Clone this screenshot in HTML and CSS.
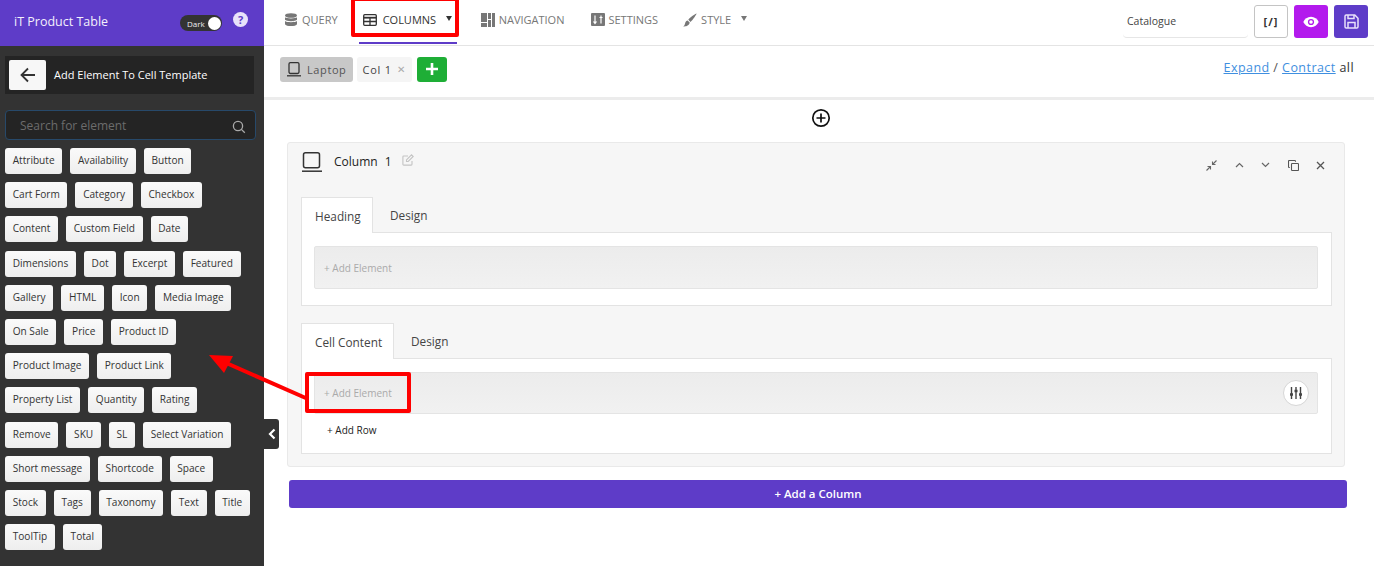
FILE: index.html
```html
<!DOCTYPE html>
<html lang="en">
<head>
<meta charset="utf-8">
<title>iT Product Table</title>
<link rel="stylesheet" href="styles.css">
</head>
<body>
<div class="app">
  <aside class="side">
    <div class="brand">
      <span class="brand-name">iT Product Table</span>
      <span class="toggle"><span class="toggle-label">Dark</span><span class="knob"></span></span>
      <span class="help">?</span>
    </div>
    <div class="back-bar">
      <span class="back"><svg width="18" height="18" viewBox="0 0 18 18" fill="none" stroke="#333" stroke-width="1.8"><path d="M16 9H2.500M9 2.500 2.500 9 9 15.500"/></svg></span>
      <span class="back-title">Add Element To Cell Template</span>
    </div>
    <div class="search">
      <span>Search for element</span>
      <svg width="14" height="14" viewBox="0 0 14 14" fill="none" stroke="#aaa" stroke-width="1.3"><circle cx="6" cy="6" r="4.600"/><path d="m9.400 9.400 3.400 3.400"/></svg>
    </div>
    <div class="chips">
      <div class="chip-row"><span class="chip">Attribute</span><span class="chip">Availability</span><span class="chip">Button</span></div>
      <div class="chip-row"><span class="chip">Cart Form</span><span class="chip">Category</span><span class="chip">Checkbox</span></div>
      <div class="chip-row"><span class="chip">Content</span><span class="chip">Custom Field</span><span class="chip">Date</span></div>
      <div class="chip-row"><span class="chip">Dimensions</span><span class="chip">Dot</span><span class="chip">Excerpt</span><span class="chip">Featured</span></div>
      <div class="chip-row"><span class="chip">Gallery</span><span class="chip">HTML</span><span class="chip">Icon</span><span class="chip">Media Image</span></div>
      <div class="chip-row"><span class="chip">On Sale</span><span class="chip">Price</span><span class="chip">Product ID</span></div>
      <div class="chip-row"><span class="chip">Product Image</span><span class="chip">Product Link</span></div>
      <div class="chip-row"><span class="chip">Property List</span><span class="chip">Quantity</span><span class="chip">Rating</span></div>
      <div class="chip-row"><span class="chip">Remove</span><span class="chip">SKU</span><span class="chip">SL</span><span class="chip">Select Variation</span></div>
      <div class="chip-row"><span class="chip">Short message</span><span class="chip">Shortcode</span><span class="chip">Space</span></div>
      <div class="chip-row"><span class="chip">Stock</span><span class="chip">Tags</span><span class="chip">Taxonomy</span><span class="chip">Text</span><span class="chip">Title</span></div>
      <div class="chip-row"><span class="chip">ToolTip</span><span class="chip">Total</span></div>
    </div>
    <span class="collapse"><svg width="8" height="12" viewBox="0 0 8 12" fill="none" stroke="#fff" stroke-width="2.2"><path d="M6.500 1.500 2 6l4.500 4.500"/></svg></span>
  </aside>

  <main class="main">
    <nav class="topnav">
      <a class="nav-item nav-query"><svg class="nav-icon" width="14" height="14" viewBox="0 0 14 14" fill="#777"><ellipse cx="7" cy="2.500" rx="6" ry="2.300"/><path d="M1 4.300c1 1.500 11 1.500 12 0v2.400c-1 1.900-11 1.900-12 0zM1 8c1 1.600 11 1.600 12 0v3.200c-1 2.500-11 2.500-12 0z"/></svg>QUERY</a>
      <a class="nav-item nav-columns"><svg class="nav-icon" width="14" height="12" viewBox="0 0 14 12" fill="none" stroke="#333" stroke-width="1.300"><rect x=".7" y=".7" width="12.600" height="10.600" rx="1"/><path d="M.7 3.700h12.600" stroke-width="1.800"/><path d="M.7 7.500h12.600M7 3.700v7.600"/></svg>COLUMNS<span class="caret caret-dark"></span></a>
      <a class="nav-item nav-navigation"><svg class="nav-icon" width="14" height="14" viewBox="0 0 14 14" fill="#777"><path d="M0 0h6v9H0zM0 10h6v4H0zM7 0h3v6H7zM11 0h3v14h-3zM7 7h3v7H7z"/></svg>NAVIGATION</a>
      <a class="nav-item nav-settings"><svg class="nav-icon" width="14" height="13" viewBox="0 0 14 13"><rect width="14" height="13" rx="1" fill="#777"/><path d="M4 2.500v8M2.500 8.500 4 10.500l1.500-2M10 2.500v8M8.500 4.500h3" stroke="#fff" stroke-width="1.200" fill="none"/></svg>SETTINGS</a>
      <a class="nav-item nav-style"><svg class="nav-icon" width="14" height="14" viewBox="0 0 14 14" fill="#777"><path d="M13.500.5c.4.400-3.700 6.600-6 8.400L5.300 6.700C7 4.400 13.100.1 13.500.5zM4.600 7.500 6.700 9.600c-.2 2.400-3 4.300-6.500 3.900 1.500-.9 1.500-2 2-3.500.4-1.300 1.300-2.200 2.400-2.500z"/></svg>STYLE<span class="caret"></span></a>
      <span class="nav-spacer"></span>
      <span class="catalogue">Catalogue</span>
      <span class="tool tool-code">[/]</span>
      <span class="tool tool-eye"><svg width="16" height="12" viewBox="0 0 16 12"><path d="M8 .8C4.500.8 1.700 3 .3 6c1.400 3 4.200 5.200 7.700 5.200S14.300 9 15.700 6C14.300 3 11.500.8 8 .8z" fill="#fff"/><circle cx="8" cy="6" r="3.100" fill="#b31aed"/><circle cx="8" cy="6" r="1.800" fill="#fff"/></svg></span>
      <span class="tool tool-save"><svg width="15" height="15" viewBox="0 0 15 15" fill="none" stroke="#e8e0fa" stroke-width="1.500"><path d="M1 2.200C1 1.500 1.500 1 2.200 1h8.600L14 4.200v8.600c0 .7-.5 1.200-1.200 1.200H2.200C1.500 14 1 13.500 1 12.800z"/><path d="M4 1v3.500h6V1M4 14V8.500h7V14"/></svg></span>
    </nav>

    <div class="subbar">
      <span class="device"><svg width="14" height="15" viewBox="0 0 14 15" fill="none" stroke="#333" stroke-width="1.300"><rect x="2" y=".7" width="10" height="10.800" rx="1.400"/><path d="M0 13.800h14"/></svg>Laptop</span>
      <span class="col-tab">Col 1<span class="col-x">✕</span></span>
      <span class="add-col"><svg width="14" height="14" viewBox="0 0 14 14" stroke="#fff" stroke-width="2.600"><path d="M7 1v12M1 7h12"/></svg></span>
      <span class="expand"><a>Expand</a> / <a>Contract</a> <span class="all">all</span></span>
    </div>

    <div class="content">
      <div class="plus-row"><svg width="20" height="20" viewBox="0 0 20 20" fill="none" stroke="#111" stroke-width="1.700"><circle cx="10" cy="10" r="8.200"/><path d="M10 5.500v9M5.500 10h9"/></svg></div>

      <section class="card">
        <header class="card-head">
          <svg class="card-laptop" width="20" height="20" viewBox="0 0 20 20" fill="none" stroke="#333" stroke-width="1.500"><rect x="1.500" y=".8" width="16" height="15" rx="2"/><path d="M0 19.200h20"/></svg>
          <span class="card-title">Column</span><span class="card-num">1</span>
          <svg class="card-edit" width="12" height="12" viewBox="0 0 12 12" fill="none" stroke="#c4c4c4" stroke-width="1.100"><path d="M10 7v3.300c0 .5-.3.800-.8.800H1.700c-.5 0-.8-.3-.8-.8V2.800c0-.5.300-.8.800-.8H6"/><path d="m4.500 5.800 5-5 1.700 1.700-5 5H4.500z"/></svg>
          <span class="card-tools">
            <svg width="11" height="11" viewBox="0 0 11 11" fill="none" stroke="#666" stroke-width="1.100"><path d="M10.500.5 7 4M6.500 1.500v3h3M.5 10.500 4 7M1.500 6.500h3v3"/></svg>
            <svg width="9" height="6" viewBox="0 0 9 6" fill="none" stroke="#666" stroke-width="1.200"><path d="m1 5 3.500-3.500L8 5"/></svg>
            <svg width="9" height="6" viewBox="0 0 9 6" fill="none" stroke="#666" stroke-width="1.200"><path d="m1 1 3.500 3.500L8 1"/></svg>
            <svg width="11" height="11" viewBox="0 0 11 11" fill="none" stroke="#555" stroke-width="1.100"><rect x="3.500" y="3.500" width="7" height="7" rx=".8"/><path d="M1.800 7.500H1.300c-.5 0-.8-.3-.8-.8V1.300c0-.5.300-.8.800-.8h5.400c.5 0 .8.300.8.800v.5"/></svg>
            <svg width="9" height="9" viewBox="0 0 9 9" fill="none" stroke="#555" stroke-width="1.300"><path d="m1 1 7 7M8 1 1 8"/></svg>
          </span>
        </header>

        <div class="tabs">
          <span class="tab tab-active tab-heading">Heading</span><span class="tab">Design</span>
        </div>
        <div class="panel panel-heading">
          <div class="drop"><span class="drop-text">+ Add Element</span></div>
        </div>

        <div class="tabs tabs-second">
          <span class="tab tab-active tab-cell">Cell Content</span><span class="tab">Design</span>
        </div>
        <div class="panel panel-cell">
          <div class="drop drop-cell">
            <span class="drop-text">+ Add Element</span>
            <span class="tune"><svg width="14" height="14" viewBox="0 0 14 14" stroke="#444" stroke-width="1.400" fill="#444"><path d="M2.500 1v12M7 1v12M11.500 1v12" fill="none"/><path d="M1 8.500h3M5.500 5h3M10 8.500h3" stroke-width="2.400"/></svg></span>
          </div>
          <span class="add-row">+ Add Row</span>
        </div>
      </section>

      <div class="add-column">+ Add a Column</div>
    </div>
  </main>

  <span class="mark mark-columns"></span>
  <span class="mark mark-add"></span>
  <svg class="arrow" width="110" height="60" viewBox="0 0 110 60"><path d="M102 47 18 10" stroke="#f00" stroke-width="4" fill="none"/><path d="M3 3 27 4 18 21z" fill="#f00"/></svg>
</div>
</body>
</html>
```

FILE: styles.css
```css
* { box-sizing: border-box; }
html, body { margin: 0; height: 100%; overflow: hidden; }
body { font-family: "Open Sans", "Noto Sans", sans-serif; color: #333; background: #fff; }
a { color: inherit; }

.app { position: relative; display: flex; width: 1374px; height: 566px; overflow: hidden; }

/* Sidebar */
.side { position: relative; flex: 0 0 264px; background: #333; }
.brand { display: flex; align-items: center; height: 46px; padding: 0 0 0 14px; background: #5e3cc8; color: #f3f0fc; }
.brand-name { width: 166px; margin-top: -4px; font-size: 12.500px; }
.toggle { display: flex; align-items: center; justify-content: space-between; width: 42px; height: 16px; padding: 0 1px 0 7px; border-radius: 8px; background: #333; }
.toggle-label { font-size: 8px; color: #eee; }
.knob { width: 13px; height: 13px; border-radius: 50%; background: #fff; }
.help { display: flex; align-items: center; justify-content: center; width: 15px; height: 15px; margin: -7px 0 0 11px; border-radius: 50%; background: #e8e2fa; color: #5e3cc8; font-size: 11px; font-weight: 700; }
.back-bar { display: flex; align-items: center; height: 38px; margin: 10px 10px 0 5px; padding-left: 4px; background: #242424; color: #fff; font-size: 11px; }
.back { display: flex; align-items: center; justify-content: center; width: 37px; height: 30px; margin-right: 8px; border-radius: 2px; background: #f7f7f7; }
.back-title { margin-top: -2px; }
.search { display: flex; align-items: center; justify-content: space-between; height: 30px; margin: 16px 8px 0 5px; padding: 0 9px 0 14px; border: 1px solid #27496a; border-radius: 4px; background: #242424; color: #6c6c6c; font-size: 12px; }
.search span { margin-top: 1px; }
.search svg { margin-top: 3px; }
.chips { display: flex; flex-direction: column; gap: 8.200px; margin: 8px 0 0 5px; }
.chip-row { display: flex; gap: 8px; }
.chip { height: 26px; padding: 0 7.700px; border-radius: 3px; background: linear-gradient(#fafafa, #eee); color: #333; font-size: 10.100px; line-height: 24px; white-space: nowrap; }
.collapse { position: absolute; left: 264px; top: 419px; display: flex; align-items: center; justify-content: center; width: 15px; height: 30px; border-radius: 0 3px 3px 0; background: #333; }

/* Top navigation */
.main { flex: 1; min-width: 0; }
.topnav { position: relative; display: flex; align-items: center; height: 46px; padding: 0 6px 6px 0; border-bottom: 1px solid #e4e4e4; color: #777; font-size: 11px; }
.nav-item { display: flex; align-items: center; }
.nav-icon { margin-right: 4px; }
.nav-query { margin-left: 20px; }
.nav-columns { position: relative; width: 98px; margin-left: 21px; padding-left: 4px; color: #333; }
.nav-columns::after { content: ""; position: absolute; left: 0; right: 0; top: 30px; height: 2px; background: #5e3cc8; }
.nav-columns .nav-icon { margin-right: 6px; }
.nav-navigation { margin-left: 24px; }
.nav-settings { margin-left: 27px; }
.nav-settings .nav-icon { margin-right: 3px; }
.nav-style { margin-left: 25px; }
.caret { width: 0; height: 0; margin: -2px 0 0 10px; border: 3.500px solid transparent; border-top: 5px solid #777; border-bottom: 0; }
.caret-dark { border-top-color: #333; }
.nav-spacer { flex: 1; }
.catalogue { width: 125px; height: 33px; margin-top: 3px; padding-left: 4px; border-bottom: 1px solid #e6e6e6; border-radius: 4px; color: #444; font-size: 10.500px; line-height: 32px; }
.tool { display: flex; align-items: center; justify-content: center; width: 34px; height: 33px; margin: 4px 0 0 6px; border-radius: 3px; }
.tool-code { border: 1px solid #c4c4c4; background: #fff; color: #333; font-size: 11px; font-weight: 700; letter-spacing: 1px; }
.tool-eye { background: #b31aed; }
.tool-save { background: #5e3cc8; }

/* Sub bar */
.subbar { display: flex; align-items: center; height: 54px; padding: 0 20px 5px 16px; border-bottom: 3px solid #ececec; }
.device { display: flex; align-items: center; gap: 6px; height: 25px; padding: 0 7px; border-radius: 3px; background: #c8c8c8; color: #555; font-size: 11px; letter-spacing: .6px; }
.col-tab { display: flex; align-items: center; width: 55px; height: 25px; margin-left: 4px; padding: 0 5px; border-radius: 3px; background: #f5f5f5; color: #444; font-size: 11px; letter-spacing: .8px; }
.col-x { margin-left: 5px; color: #aaa; font-size: 10px; }
.add-col { display: flex; align-items: center; justify-content: center; width: 30px; height: 25px; margin-left: 5px; border-radius: 3px; background: #1eae36; }
.expand { margin: -3px 0 0 auto; color: #555; font-size: 12.500px; letter-spacing: .45px; }
.expand a { color: #3f8fe0; text-decoration: underline; }
.all { color: #333; }

/* Content */
.content { padding: 0 27px 0 23px; }
.plus-row { display: flex; justify-content: center; height: 42px; margin-right: 3px; padding: 8px 0 0 10px; }
.card { width: 1058px; height: 325px; padding: 0 12px 0 13px; border: 1px solid #e9e9e9; border-radius: 3px; background: #f6f6f6; }
.card-head { display: flex; align-items: center; height: 54px; padding-bottom: 17px; color: #222; }
.card-laptop { margin-left: 1px; }
.card-title { margin-left: 12px; font-size: 12px; }
.card-num { margin-left: 7px; font-size: 12px; }
.card-edit { margin: -4px 0 0 10px; }
.card-tools { display: flex; align-items: center; gap: 17.500px; margin: 7px 0 0 auto; padding-right: 7px; }
.tabs { display: flex; height: 35px; }
.tab { display: flex; align-items: center; padding: 0 17px; color: #444; font-size: 11.800px; white-space: nowrap; }
.tab-active { position: relative; z-index: 1; height: 36px; padding: 0 13px; border: 1px solid #e3e3e3; border-bottom: 0; background: #fff; }
.tab-heading { width: 72px; }
.tab-cell { width: 93px; }
.tabs-second { margin-top: 17px; }
.panel { padding: 13px 13px 0 12px; border: 1px solid #e3e3e3; background: #fff; }
.panel-heading { height: 74px; }
.panel-cell { height: 96px; }
.drop { display: flex; align-items: center; height: 43px; padding: 0 9px; border: 1px solid #e4e4e4; border-radius: 2px; background: linear-gradient(#ececec, #f1f1f1); }
.drop-text { color: #aaa; font-size: 10px; }
.drop-cell { justify-content: space-between; height: 42px; padding-right: 8px; }
.tune { display: flex; align-items: center; justify-content: center; width: 26px; height: 26px; border: 1px solid #d6d6d6; border-radius: 50%; background: #fff; }
.add-row { display: block; margin: 9px 0 0 13px; color: #222; font-size: 10px; }
.add-column { width: 1058px; height: 28px; margin: 13px 0 0 2px; border-radius: 3px; background: #5e3cc8; color: #fff; font-size: 11.500px; font-weight: 600; line-height: 28px; text-align: center; }

/* Annotations */
.mark { position: absolute; border: 4px solid #f00; border-radius: 2px; pointer-events: none; }
.mark-columns { left: 351px; top: -3px; width: 108px; height: 40px; }
.mark-add { left: 305px; top: 372px; width: 106px; height: 41px; }
.arrow { position: absolute; left: 206px; top: 352px; }
```
